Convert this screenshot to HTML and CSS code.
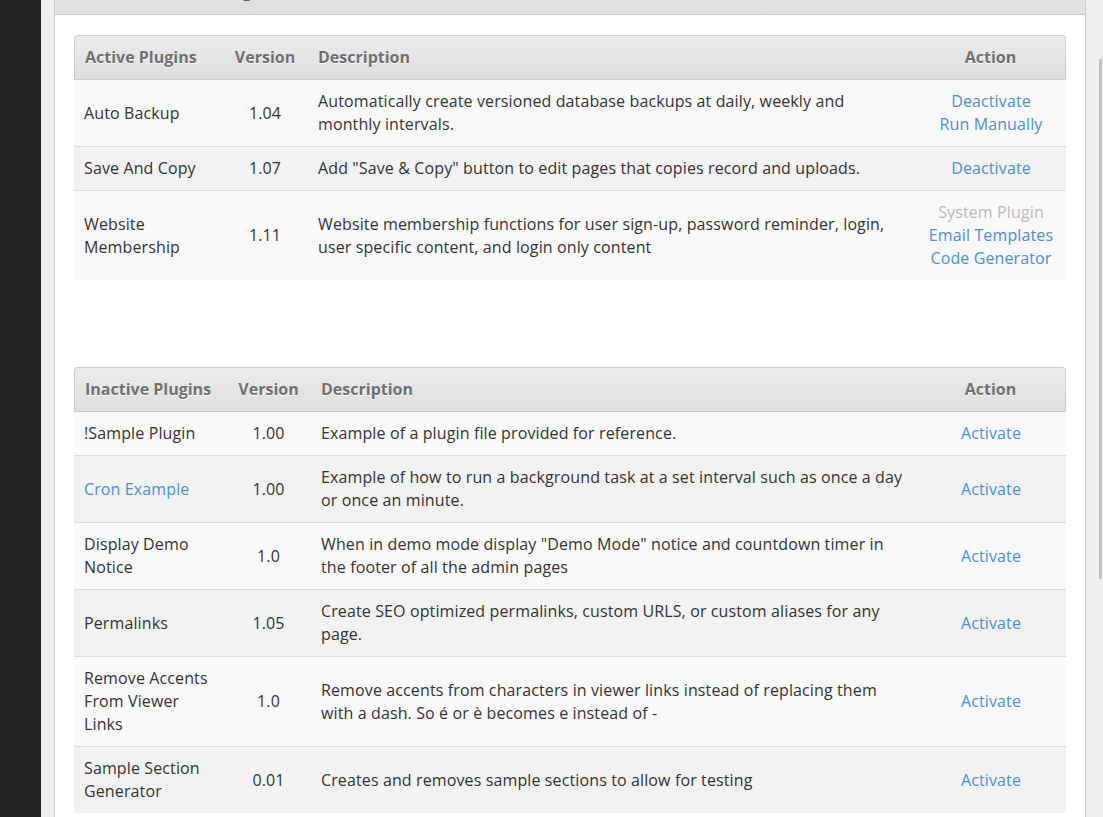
FILE: index.html
```html
<!DOCTYPE html>
<html lang="en">
<head>
    <meta charset="UTF-8">
    <title>Plugins</title>
    <link rel="stylesheet" href="styles.css">
</head>
<body>
    <div class="sidebar"></div>

    <div class="main">
        <div class="panel">
            <div class="panel-heading">
                <h2>Plugins</h2>
            </div>

            <div class="panel-body">
                <table class="plugins">
                    <colgroup>
                        <col style="width: 148px">
                        <col style="width: 86px">
                        <col>
                        <col style="width: 150px">
                    </colgroup>
                    <thead>
                        <tr>
                            <th>Active Plugins</th>
                            <th class="center">Version</th>
                            <th>Description</th>
                            <th class="center">Action</th>
                        </tr>
                    </thead>
                    <tbody>
                        <tr>
                            <td>Auto Backup</td>
                            <td class="center">1.04</td>
                            <td>Automatically create versioned database backups at daily, weekly and monthly intervals.</td>
                            <td class="center">
                                <a href="#">Deactivate</a><br>
                                <a href="#">Run Manually</a>
                            </td>
                        </tr>
                        <tr>
                            <td>Save And Copy</td>
                            <td class="center">1.07</td>
                            <td>Add "Save &amp; Copy" button to edit pages that copies record and uploads.</td>
                            <td class="center"><a href="#">Deactivate</a></td>
                        </tr>
                        <tr>
                            <td>Website Membership</td>
                            <td class="center">1.11</td>
                            <td>Website membership functions for user sign-up, password reminder, login, user specific content, and login only content</td>
                            <td class="center">
                                <span class="muted">System Plugin</span><br>
                                <a href="#">Email Templates</a><br>
                                <a href="#">Code Generator</a>
                            </td>
                        </tr>
                    </tbody>
                </table>

                <table class="plugins">
                    <colgroup>
                        <col style="width: 152px">
                        <col style="width: 85px">
                        <col>
                        <col style="width: 150px">
                    </colgroup>
                    <thead>
                        <tr>
                            <th>Inactive Plugins</th>
                            <th class="center">Version</th>
                            <th>Description</th>
                            <th class="center">Action</th>
                        </tr>
                    </thead>
                    <tbody>
                        <tr>
                            <td>!Sample Plugin</td>
                            <td class="center">1.00</td>
                            <td>Example of a plugin file provided for reference.</td>
                            <td class="center"><a href="#">Activate</a></td>
                        </tr>
                        <tr>
                            <td><a href="#">Cron Example</a></td>
                            <td class="center">1.00</td>
                            <td>Example of how to run a background task at a set interval such as once a day or once an minute.</td>
                            <td class="center"><a href="#">Activate</a></td>
                        </tr>
                        <tr>
                            <td>Display Demo Notice</td>
                            <td class="center">1.0</td>
                            <td>When in demo mode display "Demo Mode" notice and countdown timer in the footer of all the admin pages</td>
                            <td class="center"><a href="#">Activate</a></td>
                        </tr>
                        <tr>
                            <td>Permalinks</td>
                            <td class="center">1.05</td>
                            <td>Create SEO optimized permalinks, custom URLS, or custom aliases for any page.</td>
                            <td class="center"><a href="#">Activate</a></td>
                        </tr>
                        <tr>
                            <td>Remove Accents From Viewer Links</td>
                            <td class="center">1.0</td>
                            <td>Remove accents from characters in viewer links instead of replacing them with a dash. So é or è becomes e instead of -</td>
                            <td class="center"><a href="#">Activate</a></td>
                        </tr>
                        <tr>
                            <td>Sample Section Generator</td>
                            <td class="center">0.01</td>
                            <td>Creates and removes sample sections to allow for testing</td>
                            <td class="center"><a href="#">Activate</a></td>
                        </tr>
                    </tbody>
                </table>
            </div>
        </div>
    </div>

    <div class="scroll-thumb"></div>
</body>
</html>
```

FILE: styles.css
```css
html, body {
    height: 100%;
    overflow: hidden;
}
body {
    margin: 0;
    display: flex;
    font-family: 'Open Sans', 'Liberation Sans', sans-serif;
    font-size: 16px;
    line-height: 23px;
    color: #333;
    background-color: #efefef;
}
.sidebar {
    width: 41px;
    flex-shrink: 0;
    background-color: #222;
}
.main {
    flex: 1;
    padding: 0 17px 0 13px;
}
.panel {
    margin-top: -31px;
    background-color: #fff;
    border-left: 1px solid #ccc;
    border-right: 1px solid #ccc;
}
.panel-heading {
    height: 46px;
    background: linear-gradient(#e8e8e8, #dfdfdf);
    border-bottom: 1px solid #ccc;
    box-sizing: border-box;
}
.panel-heading h2 {
    margin: 0;
    padding: 8px 0 0 156px;
    font-size: 20px;
    font-weight: 600;
    line-height: 24px;
    color: #555;
}
.panel-body {
    padding: 20px 19px 40px 19px;
}
a {
    color: #4a8fd8;
    text-decoration: none;
}
.muted {
    color: #bbb;
}
.center {
    text-align: center;
}
.plugins {
    width: 100%;
    table-layout: fixed;
    border-collapse: separate;
    border-spacing: 0;
    margin-bottom: 87px;
}
.plugins th {
    padding: 10px;
    text-align: left;
    font-weight: 700;
    color: #707070;
    text-shadow: 0 1px 0 #fff;
    background: linear-gradient(#ececec, #dedede);
    border-top: 1px solid #ccc;
    border-bottom: 1px solid #ccc;
}
.plugins th.center {
    text-align: center;
}
.plugins th:first-child {
    border-left: 1px solid #ccc;
    border-top-left-radius: 4px;
}
.plugins th:last-child {
    border-right: 1px solid #ccc;
    border-top-right-radius: 4px;
}
.plugins td {
    padding: 10px;
    vertical-align: middle;
    letter-spacing: 0.12px;
    border-top: 1px solid #ddd;
    background-color: #f9f9f9;
}
.plugins tbody tr:first-child td {
    border-top: none;
}
.plugins tbody tr:nth-child(even) td {
    background-color: #f2f2f2;
}
.scroll-thumb {
    position: absolute;
    top: 59px;
    right: 1px;
    width: 3px;
    height: 520px;
    background-color: #c1c1c1;
}
```
